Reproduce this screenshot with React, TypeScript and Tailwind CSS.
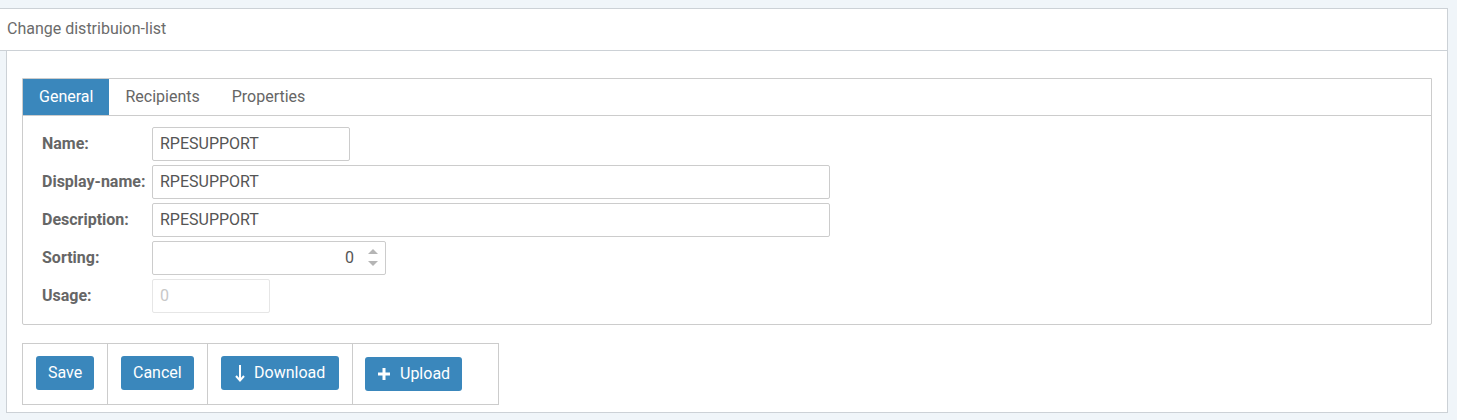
import React from "react";

const font = { fontFamily: "Roboto, 'Liberation Sans', sans-serif" };

function Field({ label, children }: { label: string; children: React.ReactNode }) {
  return (
    <div className="flex items-center h-[34px]">
      <label className="w-[110px] shrink-0 text-[16px] font-bold text-[#666]">{label}</label>
      {children}
    </div>
  );
}

export default function App() {
  return (
    <div className="w-[1457px] h-[420px] bg-[#f0f5f9] pt-2 pl-[6px]" style={font}>
      <div className="w-[1442px]">
        {/* Header */}
        <div className="-ml-[6px] w-[1448px] h-[43px] bg-white border-t border-r border-b border-[#ccd1d6] flex items-center pl-[7px] pb-[1px]">
          <span className="text-[16px] text-[#6b6b6b]">Change distribuion-list</span>
        </div>

        {/* Body */}
        <div className="bg-white border-l border-r border-b border-[#ccd1d6] px-[15px] pt-[27px] pb-[7px]">
          {/* Tabs box */}
          <div className="border border-[#ccc] rounded-br-[2px] rounded-bl-[2px]">
            <div className="flex h-[37px] border-b border-[#ccc]">
              <div className="bg-[#3a87bc] text-white text-[16px] px-4 flex items-center">General</div>
              <div className="text-[#666] text-[16px] px-4 flex items-center">Recipients</div>
              <div className="text-[#666] text-[16px] px-4 flex items-center">Properties</div>
            </div>
            <div className="pl-[19px] pt-[11px] pb-[11px] flex flex-col gap-[4px]">
              <Field label="Name:">
                <div className="w-[198px] h-[34px] border border-[#ccc] rounded-[2px] flex items-center px-[7px] text-[16px] text-[#555]">
                  RPESUPPORT
                </div>
              </Field>
              <Field label="Display-name:">
                <div className="w-[678px] h-[34px] border border-[#ccc] rounded-[2px] flex items-center px-[7px] text-[16px] text-[#555]">
                  RPESUPPORT
                </div>
              </Field>
              <Field label="Description:">
                <div className="w-[678px] h-[34px] border border-[#ccc] rounded-[2px] flex items-center px-[7px] text-[16px] text-[#555]">
                  RPESUPPORT
                </div>
              </Field>
              <Field label="Sorting:">
                <div className="w-[234px] h-[34px] border border-[#ccc] rounded-[2px] flex items-center justify-end pr-[6px] text-[16px] text-[#555]">
                  <span className="mr-[13px]">0</span>
                  <svg width="12" height="22" viewBox="0 0 12 22">
                    <path d="M1 7 L6 2 L11 7 Z" fill="#b5b5b5" />
                    <path d="M1 14 L6 19 L11 14 Z" fill="#b5b5b5" />
                  </svg>
                </div>
              </Field>
              <Field label="Usage:">
                <div className="w-[118px] h-[34px] border border-[#e6e6e6] rounded-[2px] flex items-center px-[7px] text-[16px] text-[#c8c8c8]">
                  0
                </div>
              </Field>
            </div>
          </div>

          {/* Button bar */}
          <div className="mt-[18px] flex w-[477px] h-[62px] border border-[#ccc]">
            <div className="w-[85px] flex items-start pt-[12px] pl-[13px] border-r border-[#ccc]">
              <button className="h-[34px] px-[12px] bg-[#3a87bc] text-white text-[16px] rounded-[3px]">Save</button>
            </div>
            <div className="w-[100px] flex items-start pt-[12px] pl-[13px] border-r border-[#ccc]">
              <button className="h-[34px] px-[12px] bg-[#3a87bc] text-white text-[16px] rounded-[3px]">Cancel</button>
            </div>
            <div className="w-[145px] flex items-start pt-[12px] pl-[13px] border-r border-[#ccc]">
              <button className="h-[34px] px-[14px] bg-[#3a87bc] text-white text-[16px] rounded-[3px] flex items-center gap-[9px]">
                <svg width="10" height="18" viewBox="0 0 10 18">
                  <path d="M5 1 V16 M1 12 L5 16.5 L9 12" stroke="white" strokeWidth="2" fill="none" />
                </svg>
                Download
              </button>
            </div>
            <div className="flex-1 flex items-start pt-[13px] pl-[12px]">
              <button className="h-[34px] pl-[13px] pr-[12px] bg-[#3a87bc] text-white text-[16px] rounded-[3px] flex items-center gap-[10px]">
                <svg width="12" height="12" viewBox="0 0 12 12">
                  <path d="M4.5 0 H7.5 V4.5 H12 V7.5 H7.5 V12 H4.5 V7.5 H0 V4.5 H4.5 Z" fill="white" />
                </svg>
                Upload
              </button>
            </div>
          </div>
        </div>
      </div>
    </div>
  );
}
